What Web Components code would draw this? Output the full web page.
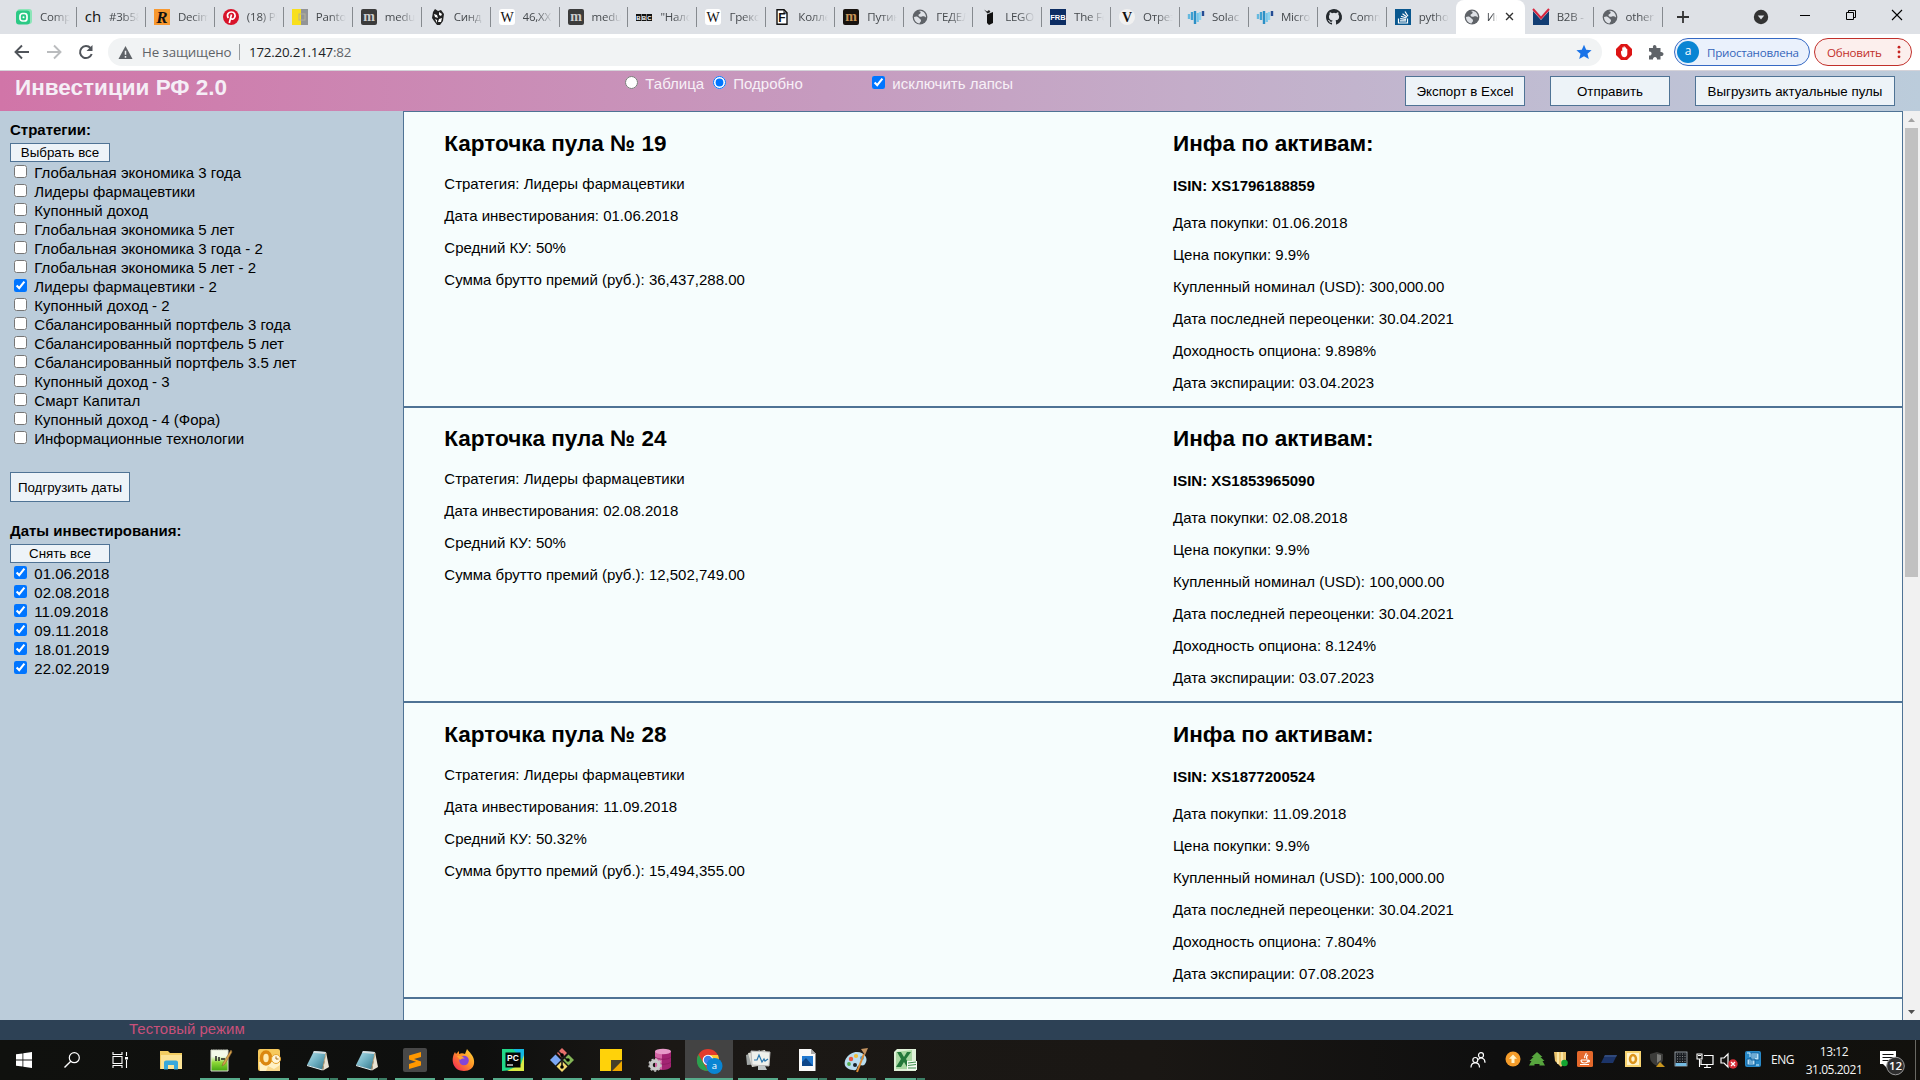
<!DOCTYPE html>
<html lang="ru">
<head>
<meta charset="utf-8">
<title>Инвестиции РФ 2.0</title>
<style>
html,body{margin:0;height:100%;overflow:hidden}
body{font-family:"Liberation Sans",Arial,sans-serif;font-size:15px;color:#000}
</style>
</head>
<body>
<desktop-screen></desktop-screen>
<script>
const UI = '"Open Sans","Noto Sans",sans-serif';
function define(name, html, setup) {
  const tpl = document.createElement('template');
  tpl.innerHTML = html;
  customElements.define(name, class extends HTMLElement {
    constructor() {
      super();
      this.attachShadow({mode: 'open'}).appendChild(tpl.content.cloneNode(true));
    }
    connectedCallback() { if (setup) setup(this, this.shadowRoot); }
  });
}

/* Icon bodies: [viewBox size, markup] */
const letter = (t, x, y, s, f, extra = '') => `<text x="${x}" y="${y}" font-size="${s}" fill="${f}" text-anchor="middle" ${extra}>${t}</text>`;
const serif = 'font-family="Liberation Serif,serif"';
const globe = '<circle cx="8" cy="8" r="7.4" fill="#5f6368"/><path d="M2 8c2-1 4-.5 5 1s2 1 2 2.500c0 1.500-1 1.500-1.500 3C4 14 2 11 2 8zM6 2.500c2-.8 3 0 2.500 1.500S6 5 6.500 6.500 9 8 10 7.500s3 0 4 1C14 5 12 2 8 1.700z" fill="#dee1e6"/>';
const notepad = '<defs><linearGradient id="n" x1="0" y1="0" x2="1" y2="1"><stop offset="0" stop-color="#b9e4ee"/><stop offset=".5" stop-color="#6fb0c2"/><stop offset="1" stop-color="#2f7084"/></linearGradient></defs><path d="M20 4l3 15-6 3.500z" fill="#e9e3d3"/><path d="M8 3l12 1-4 18L1 17z" fill="url(#n)"/><path d="M8 3l12 1-.5 2L7 4.700z" fill="#d7dfe2"/><path d="M20 5l-3.500 17" stroke="#c9b48d"/><path d="M1 17.500l15.500 4.500" stroke="#e5f0f2"/>';
const solac = '<g stroke-width="2.400" fill="none"><path d="M1 5v5" stroke="#65b9df"/><path d="M4 3v8" stroke="#3ea0d1"/><path d="M7 2v13" stroke="#2d8fc5"/><path d="M9.700 4v9" stroke="#75c5e8"/><path d="M12 3v8" stroke="#8fd3ee"/><path d="M15 2v5" stroke="#244c94"/></g>';
const medu = '<rect width="16" height="16" rx="2" fill="#3b3b3b"/>' + letter('m', 8, 12, 14, '#ccc', serif + ' font-weight="bold"');
const wiki = '<rect width="16" height="16" rx="3" fill="#fff"/>' + letter('W', 8, 13, 14, '#111', serif);
const ICONS = {
  comp: [16, '<rect x="1" y="0" width="15" height="15" rx="3" fill="#8ce5b8"/><rect x="0" y="1.500" width="14" height="14" rx="3" fill="#2bc985"/><rect x="4" y="4.500" width="7" height="7.500" rx="2.500" fill="none" stroke="#fff" stroke-width="1.700"/><circle cx="7.500" cy="8.200" r="1" fill="#fff"/>'],
  ch: [16, letter('ch', 8, 13, 15, '#111', `font-family="Open Sans"`)],
  r: [16, '<rect width="16" height="16" fill="#f8982f"/>' + letter('R', 8, 14, 17, '#111', serif + ' font-weight="bold" font-style="italic"')],
  pin: [16, '<circle cx="8" cy="8" r="8" fill="#d8132a"/><path d="M5.300 9C3 5 6 3 8.300 3c3.500 0 4.500 3 3.300 5.500-1 2.200-3 2-3.700 1M8.500 5.500L6.300 14" fill="none" stroke="#fff" stroke-width="1.700"/>'],
  panto: [16, '<rect width="9" height="16" fill="#f8df1c"/><rect x="9" width="7" height="16" fill="#929497"/><rect x="7" y="5" width="6" height="6" fill="none" stroke="#b5b199"/>'],
  medu: [16, medu],
  sind: [16, '<path d="M3 3l2-3 3 2 3-1 3 4-1 7-3 4H7l-3-4-2-3z" fill="#222"/><path d="M4 5l3 1 1 3-3-1zM9 3l3 2-1 2-2-1zM9 10l3-1-1 4H8zM5 10l2 1v3z" fill="#fff"/>'],
  wiki: [16, wiki],
  bbc: [16, '<g fill="#111"><rect y="5" width="5" height="7"/><rect x="5.500" y="5" width="5" height="7"/><rect x="11" y="5" width="5" height="7"/></g>' + letter('B', 2.5, 10.700, 6, '#fff', 'font-weight="bold"') + letter('B', 8, 10.700, 6, '#fff', 'font-weight="bold"') + letter('C', 13.500, 10.700, 6, '#fff', 'font-weight="bold"')],
  f: [16, '<path d="M3 .7h7l3 3v11.600H3z" fill="#fff" stroke="#111" stroke-width="1.400"/><path d="M10 1v3h3" fill="none" stroke="#111"/>' + letter('F', 8, 13, 12, '#111', 'font-weight="bold"')],
  putin: [16, '<rect width="16" height="16" rx="2" fill="#18130f"/>' + letter('m', 8, 12, 14, '#c69358', serif + ' font-weight="bold"')],
  globe: [16, globe],
  lego: [16, '<path d="M6 5.500l6-2.500v11l-4 2-2-2z" fill="#111"/><path d="M3 .5l3 2 2-1.500 1.500 2-3 1.500z" fill="#222"/>'],
  frb: [16, '<rect width="16" height="16" fill="#0c2d63"/>' + letter('FRB', 8, 11, 7.500, '#fff', 'font-weight="bold"')],
  v: [16, '<circle cx="8" cy="8" r="8" fill="#f1f1f1"/>' + letter('V', 8, 13, 14, '#111', serif + ' font-weight="bold"')],
  solac: [16, solac],
  github: [16, '<path fill="#24292e" d="M8 0C3.580 0 0 3.580 0 8c0 3.540 2.290 6.530 5.470 7.590.4.070.55-.17.55-.38v-1.490c-2.010.37-2.530-.49-2.690-.94-.09-.23-.48-.94-.82-1.130-.28-.15-.68-.52-.01-.53.63-.01 1.080.58 1.230.82.72 1.210 1.870.87 2.330.66.07-.52.280-.87.510-1.070-1.780-.2-3.640-.89-3.640-3.950 0-.87.310-1.590.82-2.150-.08-.2-.36-1.020.08-2.120 0 0 .67-.21 2.200.82a7.500 7.500 0 0 1 4 0c1.530-1.040 2.200-.82 2.200-.82.44 1.100.16 1.920.08 2.120.51.560.82 1.270.82 2.150 0 3.070-1.870 3.750-3.650 3.950.29.250.54.730.54 1.480v2.190c0 .21.150.46.550.38A8 8 0 0 0 8 0z"/>'],
  so: [16, '<rect width="16" height="16" fill="#0a588f"/><path d="M3.500 9.500V14h9V9.500M5 11.800h6M5.200 9.600l5.800.7M6 7.200l5.500 1.800M7.500 4.800l4.500 3.300M10 2.500l3 4.700" fill="none" stroke="#fff" stroke-width="1.200"/>'],
  b2b: [16, '<path d="M0 2l8 9 8-9v14H0z" fill="#123d73"/><path d="M0 0l8 9 8-9" fill="none" stroke="#d8253e" stroke-width="2"/>'],
  x: [16, '<path d="M3 3l10 10M13 3L3 13" stroke="#333" stroke-width="2"/>'],
  plus: [16, '<path d="M8 2v12M2 8h12" stroke="#333" stroke-width="1.800"/>'],
  drop: [16, '<circle cx="8" cy="8" r="7.200" fill="#333"/><path d="M4.800 6.500h6.400L8 10.500z" fill="#dee1e6"/>'],
  min: [16, '<path d="M3 8.500h10" stroke="#000"/>'],
  restore: [16, '<path d="M3.500 5.500h7v7h-7zM5.500 5.500v-2h7v7h-2" fill="none" stroke="#000"/>'],
  close: [16, '<path d="M3 3l10 10M13 3L3 13" stroke="#000" stroke-width="1.100"/>'],
  back: [16, '<path d="M15 8H2M8 1.500L1.500 8 8 14.500" fill="none" stroke="#50545a" stroke-width="1.900"/>'],
  fwd: [16, '<path d="M1 8h13M8 1.500L14.500 8 8 14.500" fill="none" stroke="#babcbe" stroke-width="1.900"/>'],
  reload: [16, '<path d="M13.700 10A6 6 0 1 1 12.500 4" fill="none" stroke="#50545a" stroke-width="2"/><path d="M14.500 1v6h-6z" fill="#50545a"/>'],
  warn: [16, '<path d="M8 1l7.500 14H.5z" fill="#5f6368"/><path d="M8 6v4.500M8 11.800v1.700" stroke="#f1f3f4" stroke-width="1.600"/>'],
  star: [16, '<path d="M8 .8l2.200 5 5.400.4-4.100 3.500 1.300 5.300L8 12.200 3.200 15l1.300-5.300L.4 6.200l5.400-.4z" fill="#1a73e8"/>'],
  adb: [16, '<path d="M5 0h6l5 5v6l-5 5H5l-5-5V5z" fill="#dd1515"/><path d="M5 7.500c0-1 1.200-1 1.200 0V4c0-1 1.300-1 1.300 0V3c0-1 1.300-1 1.300 0v1c0-1 1.300-1 1.300 0v1.200c0-.9 1.200-.9 1.200 0V10c0 2-1.300 3.200-3 3.200-2 0-3.300-1.700-3.300-5.700z" fill="#fff"/>'],
  puzzle: [16, '<path d="M1 4h4c-1-4 4-4 3.500 0h4v4c4-.5 4 4.500 0 4v3.500H9c.5-3.500-4.500-3.500-4 0H1v-4c3.500.5 3.500-4.500 0-4z" fill="#5f6368"/>'],
  dots: [16, '<circle cx="8" cy="2.500" r="1.600" fill="#c5221f"/><circle cx="8" cy="8" r="1.600" fill="#c5221f"/><circle cx="8" cy="13.500" r="1.600" fill="#c5221f"/>'],
  start: [16, '<path d="M0 2.300L6.500 1.400v6.200H0zM7.300 1.300L16 0v7.600H7.300zM0 8.400h6.500v6.200L0 13.700zM7.300 8.400H16V16l-8.700-1.300z" fill="#fff"/>'],
  search: [16, '<circle cx="10.300" cy="5.700" r="5" fill="none" stroke="#fff" stroke-width="1.200"/><path d="M6.800 9.300L.5 15.600" stroke="#fff" stroke-width="1.400"/>'],
  task: [16, '<path d="M1 0v2.500h9V0M1 16v-2.500h9V16M1 4.500h9v7H1zM14.500 0v4M14.500 8v8" fill="none" stroke="#fff" stroke-width="1.100"/><rect x="13" y="5" width="3" height="2.500" fill="#fff"/>'],
  explorer: [24, '<path d="M1 3h8l2 2h12v16H1z" fill="#f2cd62"/><path d="M2 7h21v14H2z" fill="#fce496"/><path d="M5 21.500v-7q0-2 2-2h10q2 0 2 2v7h-4v-4.500H9V21.500z" fill="#37a8db"/>'],
  npp: [24, '<defs><linearGradient id="g" x1="0" y1="0" x2="0" y2="1"><stop offset=".3" stop-color="#f4fbe9"/><stop offset=".6" stop-color="#8dd836"/><stop offset="1" stop-color="#43a512"/></linearGradient></defs><path d="M3 2h17v21H3z" fill="url(#g)" stroke="#d7dccb"/><path d="M4 1.500h15" stroke="#555" stroke-dasharray="1 1.500"/><path d="M8 8v5M11 9v4M13 11h4" stroke="#222" stroke-width="1.500"/><path d="M23 2l-8 13-1 3 3-2 7-12z" fill="#d8a64c" stroke="#8a6230" stroke-width=".6"/>'],
  outlook: [24, '<rect x="1" y="1" width="22" height="22" rx="2" fill="#f7c95c"/><path d="M2 14h21v9H3z" fill="#fff1c5"/><ellipse cx="9" cy="10" rx="4.500" ry="6" fill="#ffe9b0" stroke="#db8711" stroke-width="3.600"/><circle cx="19" cy="11" r="4.500" fill="#fff5da" stroke="#e6a42e"/><path d="M19 8.500V11h2.500" stroke="#a46a17" fill="none"/><path d="M11 18l6 3 6-4v6H9z" fill="#f9d98d"/>'],
  notepad: [24, notepad],
  sublime: [24, '<rect width="24" height="24" rx="2" fill="#484848"/><path d="M18 4v5l-7 2 7 2.500v4L6 21v-5l7-2.300-7-2.300V7.500z" fill="#ff9800"/>'],
  firefox: [24, '<defs><linearGradient id="ff" x1="1" y1="0" x2="0" y2="1"><stop offset="0" stop-color="#ffe23d"/><stop offset=".45" stop-color="#ff9227"/><stop offset="1" stop-color="#f4185e"/></linearGradient></defs><path d="M3 4l1 2 3-3v3c2-1 4-1 6 0l2-5c2 3 3 3 4 5 5 5 5 17-7 17C1 23-2 12 3 4z" fill="url(#ff)"/><circle cx="12" cy="12.500" r="4.800" fill="#8445d9"/><path d="M5 8c3-1 6 0 8 3-2-1-4 0-5 1z" fill="#ffa330"/>'],
  pycharm: [24, '<path d="M1 1h11l11 3-3 17-19 2z" fill="#21d789"/><path d="M12 1h11v12z" fill="#13b8e2"/><path d="M23 7v16H6l14-7z" fill="#d9ec46"/><rect x="4.500" y="4.500" width="15" height="15" fill="#050505"/>' + letter('PC', 12, 13, 8.500, '#fff', 'font-weight="bold"') + '<path d="M6 17h6" stroke="#fff" stroke-width="1.200"/>'],
  git: [24, '<path d="M12 0l5 5-5 5-5-5z" fill="#e8706c"/><path d="M5.500 6.500l5.500 5.500-5.500 5.500L0 12z" fill="#7ba7f5"/><path d="M18.500 6.500L24 12l-5.500 5.500L13 12z" fill="#84b657"/><path d="M12 13l5.500 5.500L12 24l-5.500-5.500z" fill="#f3d96e"/><path d="M8 3l9 9M12 7v12" stroke="#191919" stroke-width="1.600"/><circle cx="12" cy="7" r="1.800"/><circle cx="18" cy="12" r="1.800"/><circle cx="12" cy="19" r="1.800"/>'],
  sticky: [24, '<path d="M1 1h22v12l-11 10H1z" fill="#ffd20a"/><path d="M12 12h11v1L13 23h-1z" fill="#463f2a"/><path d="M23 13v10H13z" fill="#efa900"/>'],
  ssms: [24, '<path d="M7 3v16c3 4 13 4 16 0V3z" fill="#a32473"/><path d="M7 3v16c1 1.500 4 2.500 7 2.600V5z" fill="#d465a5"/><ellipse cx="15" cy="3.500" rx="8" ry="2.700" fill="#e79ac9"/><path d="M7 9c3 3 13 3 16 0M7 14c3 3 13 3 16 0" fill="none" stroke="#8f1d63"/><circle cx="7" cy="17" r="4" fill="none" stroke="#c9c9c9" stroke-width="3.500"/><circle cx="7" cy="17" r="6" fill="none" stroke="#c4c4c4" stroke-width="1.500" stroke-dasharray="2 2"/>'],
  chrome: [26, '<circle cx="12" cy="13" r="11" fill="#e33b2e"/><path d="M2.500 7.500L8 17l4 7C1 24-1 14 2.500 7.500z" fill="#2aa14f"/><path d="M12 8h10c3 8-2 16-10 16l4.500-8z" fill="#fcc934"/><circle cx="12" cy="13" r="5.300" fill="#fff"/><circle cx="12" cy="13" r="4.200" fill="#3d7fe8"/><circle cx="18.500" cy="19" r="8" fill="#0985d3"/>' + letter('a', 18.500, 22, 9.500, '#fff', 'font-family="Open Sans"')],
  perf: [24, '<path d="M0 7l14-5v14L1 17z" fill="#a0a5a4"/><path d="M2 5l17-3 4 14-17 3z" fill="#deded6"/><path d="M5 3l19 1-1 14-17-1z" fill="#eef0ec" stroke="#bbb"/><path d="M8 12h3l2-5 3 7 2-3 1 2 3-2" fill="none" stroke="#2776ae" stroke-width="1.200"/><path d="M12 18h7l2 4-9 0z" fill="#bfc6c7"/>'],
  doc: [24, '<path d="M4 1h12l4.500 4.500V23H4z" fill="#fafafa"/><path d="M16 1v5h5z" fill="#aaa"/><path d="M7 8h11v10H7z" fill="#2279d0"/><path d="M7 18v-4l4-4 7 8z" fill="#0c4589"/>'],
  paint: [24, '<path d="M2 19c-4-5 2-15 11-15 8 0 12 7 8 12-2 3-5 0-7 2s0 5-5 4c-3 0-5-1-7-3z" fill="#b8dcef"/><circle cx="7" cy="11" r="2.200" fill="#e8543e"/><circle cx="5" cy="16" r="1.900" fill="#55ae51"/><circle cx="12" cy="8" r="2.100" fill="#f0bd38"/><circle cx="18" cy="10" r="2" fill="#4f9fd2"/><circle cx="11" cy="17" r="2" fill="#17222a"/><path d="M20 6L13 24" stroke="#d98a35" stroke-width="2"/><path d="M17 1l7-1-3 7z" fill="#c49461"/>'],
  excel: [24, '<path d="M4 1h19v22H1V4z" fill="#dff1d8"/><path d="M3 4L19 2v19L3 21z" fill="#a9d8a2"/><path d="M4 4h4l3 5 3-5h4l-5 7 5 8h-4l-3-5-3 5H3l5-8z" fill="#23783a"/><path d="M14 13h10v9H14z" fill="#f3faf1"/><path d="M15 15l8-1M15 17.500l8-1M15 20h8" stroke="#3e8d4e"/>'],
  people: [16, '<g fill="none" stroke="#fff" stroke-width="1.200"><circle cx="5.300" cy="8" r="2.500"/><path d="M1 15.500c0-6.300 8.500-6.300 8.500 0"/><circle cx="11" cy="3.200" r="2.500"/><path d="M8.300 7.700c2-3 6.700-2 6.700 3"/></g>'],
  up: [16, '<circle cx="8" cy="8" r="7.500" fill="#f49c2a"/><path d="M8 3.500l4 4.200H9.500V12h-3V7.700H4z" fill="#fff3c9"/>'],
  green: [16, '<path d="M8 1l5.500 5h-2l4 4h-2l2.500 4.500H10.500V13h-5v1.500H0L2.500 10H.5l4-4h-2z" fill="#57a53e"/>'],
  shield: [16, '<path d="M1 1h12v9l-5 6-6-6z" fill="#ebc46d"/><path d="M5 1v12M9 1v13" stroke="#fff0b8" stroke-width="1.500"/><circle cx="11.500" cy="12" r="3.300" fill="#14a531"/>'],
  java: [16, '<rect width="16" height="16" rx="1.500" fill="#e4682b"/><path d="M9 2c1 2-3 3-1 5M11 4c-2 1-2 2-1 4M4 9h7q0 3-3.500 3T4 9M11 9c2 0 2 2 0 2M3 13.500h9" fill="none" stroke="#fff" stroke-width="1.200"/>'],
  blue: [16, '<path d="M4 4h12l-4 8H0z" fill="#1c3468"/><path d="M4 4h12l-1 2H3z" fill="#30497a"/>'],
  otray: [16, '<rect width="16" height="16" fill="#f8d36f"/><rect x="2" y="2" width="12" height="12" fill="#fff3ca"/><ellipse cx="8" cy="8" rx="3" ry="4" fill="none" stroke="#dc941d" stroke-width="2.500"/>'],
  dark: [16, '<path d="M1 3l7-2 6 2v5q0 5-6 7-7-3-7-9z" fill="#3c3c3a"/><path d="M8 3l4 1v5l-4 3z" fill="#7b7b78"/><path d="M11 11l5 5H7z" fill="#c9961f"/>'],
  grid: [16, '<rect x="2" y="1" width="12" height="14" fill="#191d22" stroke="#adb7be" stroke-width=".8"/><path d="M4 3h9M4 5.500h9M4 8h9M4 10.500h9" stroke="#888" stroke-dasharray="1 1.500"/><path d="M2.500 12h11v3h-11z" fill="#75bbe2"/>'],
  net: [18, '<path d="M8 4.500h9v9H5V9M8 16.500h7M11 13.500v3" fill="none" stroke="#fff" stroke-width="1.200"/><path d="M1 3h5v5H1zM3.500 8v8" fill="none" stroke="#fff" stroke-width="1.100"/><path d="M2 4.500h3" stroke="#fff"/>'],
  sound: [18, '<path d="M1 7h3l4-4v13l-4-4H1z" fill="none" stroke="#fff" stroke-width="1.200"/><circle cx="13" cy="13" r="4.700" fill="#d52e36"/><path d="M11 11l4 4M15 11l-4 4" stroke="#fff" stroke-width="1.300"/>'],
  bapp: [16, '<rect width="16" height="16" rx="2" fill="#2788c7"/><path d="M6 2h8v7H6zM2 8h8v6H2z" fill="#b8dff5" stroke="#0e609f"/><path d="M7 4h5M7 6h5M4 10h4M4 12h4" stroke="#2579b4"/><path d="M2 2h3v4M14 14h-3" stroke="#d6f0ff" fill="none"/>'],
  notif: [28, '<path d="M2 2h16v13h-9v4l-4-4H2z" fill="#fff"/><path d="M4.500 5.500h11M4.500 8.500h11M4.500 11.500h7" stroke="#111"/><circle cx="17.500" cy="17" r="8.800" fill="#2e2e2e" stroke="#999"/>' + letter('12', 17.500, 21.200, 11.500, '#fff', 'font-family="Open Sans" font-weight="600"')]
};
define('app-icon', '<style>:host{display:block;flex:none}svg{display:block;overflow:visible;font-family:"Liberation Sans",sans-serif}</style><div></div>', (el, root) => {
  const [box, body] = ICONS[el.getAttribute('name')];
  const size = el.getAttribute('size') || box;
  root.querySelector('div').innerHTML = `<svg width="${size}" height="${size}" viewBox="0 0 ${box} ${box}">${body}</svg>`;
});

/* Browser chrome */
define('browser-tab', `<style>
:host{display:flex;box-sizing:border-box;width:68.950px;height:34px;padding:0 7px 1px 8px;align-items:center;gap:8px;flex:none;background:linear-gradient(#868a8f,#868a8f) right center/1px 20px no-repeat}
:host([active]){background:#fff;border-radius:8px 8px 0 0;gap:7px}
:host([quiet]){background:none}
.t{flex:1;min-width:0;overflow:hidden;white-space:nowrap;font:11.500px/18px ${UI};letter-spacing:-.2px;color:#45494d;-webkit-mask-image:linear-gradient(90deg,#000 45%,transparent)}
:host([active]) .t{flex:0 0 10px}
</style><slot name="icon"></slot><span class="t"><slot></slot></span><slot name="close"></slot>`);
const TABS = [['comp','Comp'],['ch','#3b58'],['r','Decim'],['pin','(18) Pi'],['panto','Panto'],['medu','medu'],['sind','Синд'],['wiki','46,XX'],['medu','medu'],['bbc','"Нало'],['wiki','Грекс'],['f','Колле'],['putin','Путин'],['globe','ГЕДЕЛ'],['lego','LEGO'],['frb','The Fe'],['v','Отрез'],['solac','Solac'],['solac','Micro'],['github','Comm'],['so','pytho'],['globe','Ин'],['b2b','B2B -'],['globe','other']];
define('browser-tabs', `<style>
:host{display:flex;height:34px;background:#dee1e6;padding-left:8px;box-sizing:border-box;align-items:center}
.end{flex:1;display:flex;align-items:center;padding:0 15px 0 12.800px}
.g1{margin-left:62px}.g2{margin-left:28px}.g3{margin-left:30px}
.g2,.g3,.g4{margin-top:-4px}.g4{margin-left:30px}
</style>${TABS.map(([i, t], n) => `<browser-tab${n == 21 ? ' active' : n == 20 ? ' quiet' : ''}><app-icon slot="icon" name="${i}" size="16"></app-icon>${t}${n == 21 ? '<app-icon slot="close" name="x" size="11"></app-icon>' : ''}</browser-tab>`).join('')}
<div class="end"><app-icon name="plus" size="16"></app-icon><app-icon class="g1" name="drop" size="16"></app-icon><app-icon class="g2" name="min" size="16"></app-icon><app-icon class="g3" name="restore" size="16"></app-icon><app-icon class="g4" name="close" size="16"></app-icon></div>`);
define('browser-toolbar', `<style>
:host{display:flex;height:37px;box-sizing:border-box;border-bottom:1px solid #d5d3d9;background:#fff;align-items:center;padding:0 8px 0 14px;font-family:${UI}}
.nav{display:flex;gap:16px;width:94px}
.omni{display:flex;align-items:center;height:28px;border-radius:14px;background:#f1f3f4;width:1494px;box-sizing:border-box;padding:0 10px;font-size:13.300px;line-height:20px;color:#5f6368}
.ns{width:89px;margin-left:9px;white-space:nowrap;letter-spacing:-.12px}
.bar{width:1px;height:16px;background:#9a9da0;margin:0 9px 0 8px}
b{font-weight:400;color:#202124}.url{flex:1;letter-spacing:-.19px}
.ext{display:flex;gap:16px;margin:0 10px 0 14px}
.pill{display:flex;align-items:center;box-sizing:border-box;height:28px;border:1px solid #3569c4;border-radius:14px;width:136px;background:#eaf1fc;color:#3565ba;font-size:11.600px;letter-spacing:-.25px;padding-left:2px;white-space:nowrap}
.av{width:22px;height:22px;border-radius:50%;background:#0985d3;color:#fff;text-align:center;line-height:20px;margin-right:8px;font-size:12px}
.upd{border-color:#c1302b;background:#fcefed;color:#c1302b;width:98px;margin-left:4px;padding-left:12px;gap:10px}
</style><div class="nav"><app-icon name="back" size="16"></app-icon><app-icon name="fwd" size="16"></app-icon><app-icon name="reload" size="16"></app-icon></div>
<div class="omni"><app-icon name="warn" size="15"></app-icon><span class="ns">Не защищено</span><span class="bar"></span><span class="url"><b>172.20.21.147</b>:82</span><app-icon name="star" size="16"></app-icon></div>
<div class="ext"><app-icon name="adb" size="16"></app-icon><app-icon name="puzzle" size="16"></app-icon></div>
<div class="pill"><span class="av">a</span>Приостановлена</div><div class="pill upd">Обновить<app-icon name="dots" size="14"></app-icon></div>`);

/* Application */
define('app-button', `<style>:host{display:flex;align-items:center;justify-content:center;box-sizing:border-box;border:1px solid #4f7395;background:#edf3f8;height:30px;width:120px;font-size:13.333px;line-height:15px;white-space:nowrap;flex:none}
:host([small]){width:100px;height:19px}:host([wide]){width:200px}</style><slot></slot>`);
define('choice-row', `<style>:host{display:flex;height:19px;align-items:flex-start;white-space:nowrap}input{margin:3px 3px 0 4px;width:13px;height:13px;flex:none}
span{line-height:17px;padding:2px 0 0 4.300px}</style><input type="checkbox"><span><slot></slot></span>`, (el, root) => {
  const i = root.querySelector('input');
  if (el.hasAttribute('radio')) i.type = 'radio';
  i.checked = el.hasAttribute('checked');
});
define('app-header', `<style>
:host{display:flex;height:40px;background:linear-gradient(90deg,#d175a8,#c69bbf 43%,#c4adc9 62%,#bbccdb);align-items:flex-start}
h1{margin:4px 0 0 15px;font-size:22.500px;line-height:26px;color:#f5eef6;width:606px;white-space:nowrap}
.opts{display:flex;color:#f7f0f7;margin-top:2px;width:784px}
.r1{width:88px}.r2{width:159px}
.btns{display:flex;gap:25px;margin-top:5px}
</style><h1>Инвестиции РФ 2.0</h1>
<div class="opts"><choice-row radio class="r1">Таблица</choice-row><choice-row radio checked class="r2">Подробно</choice-row><choice-row checked>исключить лапсы</choice-row></div>
<div class="btns"><app-button>Экспорт в Excel</app-button><app-button>Отправить</app-button><app-button wide>Выгрузить актуальные пулы</app-button></div>`);
const STRATS = ['Глобальная экономика 3 года','Лидеры фармацевтики','Купонный доход','Глобальная экономика 5 лет','Глобальная экономика 3 года - 2','Глобальная экономика 5 лет - 2','Лидеры фармацевтики - 2','Купонный доход - 2','Сбалансированный портфель 3 года','Сбалансированный портфель 5 лет','Сбалансированный портфель 3.5 лет','Купонный доход - 3','Смарт Капитал','Купонный доход - 4 (Фора)','Информационные технологии'];
const DATES = ['01.06.2018','02.08.2018','11.09.2018','09.11.2018','18.01.2019','22.02.2019'];
define('filter-panel', `<style>
:host{display:block;width:403px;box-sizing:border-box;padding:10px 0 0 10px;background:#bbccda;flex:none}
.h{font-weight:bold;line-height:17px;height:22px}
.load{margin:25px 0 20px}
</style><div class="h">Стратегии:</div><app-button small>Выбрать все</app-button>
${STRATS.map((s, i) => `<choice-row${i == 6 ? ' checked' : ''}>${s}</choice-row>`).join('')}
<app-button class="load">Подгрузить даты</app-button>
<div class="h">Даты инвестирования:</div><app-button small>Снять все</app-button>
${DATES.map(s => `<choice-row checked>${s}</choice-row>`).join('')}`);
define('pool-card', `<style>
:host{display:flex;box-sizing:border-box;height:295.500px;border:1px solid #4f7395;background:#f6fdfd;padding:18px 0 0 40.300px;flex:none}
.c1{width:728.700px}
h2{font-size:22.500px;line-height:26px;margin:.7px 0 0;height:37.300px}
::slotted(p){margin:0;line-height:32px}
.isin{font-weight:bold;line-height:32px;height:37px;padding-top:1.700px;box-sizing:content-box}
</style><div class="c1"><h2>Карточка пула № <slot name="num"></slot></h2><slot name="pool"></slot></div>
<div><h2>Инфа по активам:</h2><div class="isin">ISIN: <slot name="isin"></slot></div><slot name="asset"></slot></div>`);
const CARDS = [
  ['19','01.06.2018','50%','36,437,288.00','XS1796188859','300,000.00','9.898%','03.04.2023'],
  ['24','02.08.2018','50%','12,502,749.00','XS1853965090','100,000.00','8.124%','03.07.2023'],
  ['28','11.09.2018','50.32%','15,494,355.00','XS1877200524','100,000.00','7.804%','07.08.2023']
];
define('pool-list', `<style>:host{display:flex;flex-direction:column;flex:1;overflow:hidden}.next{height:60px;flex:none;box-sizing:border-box;border:1px solid #4f7395;background:#f6fdfd}</style>
${CARDS.map(c => `<pool-card><span slot="num">${c[0]}</span>
<p slot="pool">Стратегия: Лидеры фармацевтики</p><p slot="pool">Дата инвестирования: ${c[1]}</p><p slot="pool">Средний КУ: ${c[2]}</p><p slot="pool">Сумма брутто премий (руб.): ${c[3]}</p>
<span slot="isin">${c[4]}</span><p slot="asset">Дата покупки: ${c[1]}</p><p slot="asset">Цена покупки: 9.9%</p><p slot="asset">Купленный номинал (USD): ${c[5]}</p><p slot="asset">Дата последней переоценки: 30.04.2021</p><p slot="asset">Доходность опциона: ${c[6]}</p><p slot="asset">Дата экспирации: ${c[7]}</p></pool-card>`).join('')}<div class="next"></div>`);
define('scroll-bar', `<style>:host{display:flex;flex-direction:column;width:17px;background:#f1f1f1;align-items:center;flex:none}
.thumb{width:13px;height:449px;background:#c1c1c1}.gap{flex:1}svg{display:block;height:17px;width:17px}</style>
<svg><path d="M5 11h7L8.500 7z" fill="#a3a3a3"/></svg><div class="thumb"></div><div class="gap"></div><svg><path d="M5 7h7L8.500 11z" fill="#505050"/></svg>`);

/* Windows taskbar */
define('task-item', `<style>:host{display:flex;width:48px;height:40px;box-sizing:border-box;align-items:center;justify-content:center;flex:none}
:host([open]){background:linear-gradient(#57ab8b,#57ab8b) center bottom/40px 2px no-repeat}
:host([multi]){background:linear-gradient(90deg,#57ab8b 31px,#1c2f28 31px,#1c2f28 32px,#3c7e65 32px) center bottom/40px 2px no-repeat}
:host([active]){background:linear-gradient(#57ab8b,#57ab8b) center bottom/48px 2px no-repeat,#434343}</style><slot></slot>`);
const TASKS = [['start','sys',16],['search','sys',16],['task','sys',16],['explorer','',24],['npp','open',24],['outlook','open',24],['notepad','multi',24],['notepad','multi',24],['sublime','open',24],['firefox','open',24],['pycharm','open',24],['git','open',24],['sticky','open',24],['ssms','open',24],['chrome','active',26],['perf','open',24],['doc','multi',24],['paint','multi',24],['excel','multi',24]];
define('task-bar', `<style>
:host{display:flex;height:40px;background:linear-gradient(90deg,#10110e,#0e0f0e 25%,#1b1815 35%,#1a1714 60%,#0f0f0f 78%,#12110d);color:#f5f5f5;font-family:${UI}}
task-item{margin-right:.950px}
task-item[sys]{margin:0}
task-item:nth-of-type(4){margin-left:2.800px}
.tray{display:flex;flex:1;align-items:center;justify-content:flex-end}
.ic{display:flex;gap:8px;margin-left:19px}
.lang{font-size:12px;width:24px;margin:0 10px 2px 10.500px;letter-spacing:-.5px}
.clock{width:58px;text-align:center;font-size:12px;line-height:18px;letter-spacing:-.45px;margin-top:1px}
.n{margin:5px 9px 0 15px}.end{width:1px;height:40px;background:#696963;margin-right:4px}
.w{margin:0 -1px}
</style>${TASKS.map(([n, s, z]) => `<task-item ${s}><app-icon name="${n}" size="${z}"></app-icon></task-item>`).join('')}
<div class="tray"><app-icon name="people" size="16"></app-icon><div class="ic">${['up','green','shield','java','blue','otray','dark','grid'].map(n => `<app-icon name="${n}" size="16"></app-icon>`).join('')}<app-icon class="w" name="net" size="18"></app-icon><app-icon class="w" name="sound" size="18"></app-icon><app-icon name="bapp" size="16"></app-icon></div>
<div class="lang">ENG</div><div class="clock">13:12<br>31.05.2021</div><app-icon class="n" name="notif" size="28"></app-icon><div class="end"></div></div>`);

define('desktop-screen', `<style>
:host{display:flex;flex-direction:column;width:1920px;height:1080px;overflow:hidden;background:#bbccda}
.body{display:flex;height:909px}
.foot{height:20px;box-sizing:border-box;background:#2d4155;color:#c9507a;line-height:17px;padding-left:129px}
</style><browser-tabs></browser-tabs><browser-toolbar></browser-toolbar><app-header></app-header>
<div class="body"><filter-panel></filter-panel><pool-list></pool-list><scroll-bar></scroll-bar></div><div class="foot">Тестовый режим</div><task-bar></task-bar>`);
</script>
</body>
</html>
